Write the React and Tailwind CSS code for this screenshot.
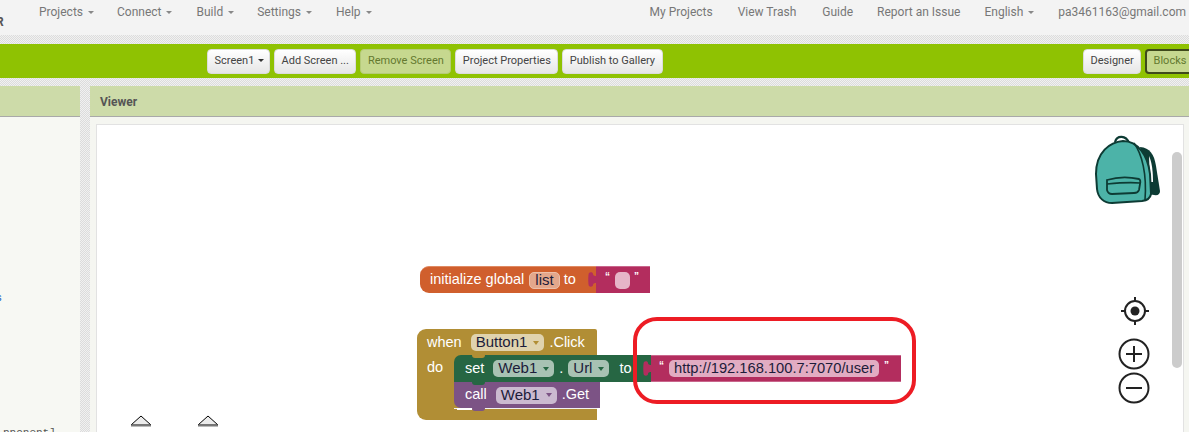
const dotted = 'bg-[repeating-conic-gradient(#dcdcdc_0_25%,#f1f1f1_0_50%)] bg-[length:2px_2px]';

function Caret({ className = 'ml-[5px] border-t-[#888]' }) {
  return <span className={`inline-block w-0 h-0 border-x-[3px] border-x-transparent border-t-[3px] align-middle ${className}`}></span>;
}

function NavItem({ label, caret, className = '' }) {
  return (
    <span className={`whitespace-nowrap ${className}`}>
      {label}
      {caret && <Caret />}
    </span>
  );
}

function ToolButton({ children, active, className = '' }) {
  const look = active
    ? 'bg-[#c6d88f] text-[#64792f]'
    : 'bg-gradient-to-b from-white to-[#e6e6e6] border border-[#dcdcdc] text-[#444]';
  return (
    <button className={`h-[25px] px-[6.5px] rounded-[4px] text-[11px] whitespace-nowrap ${look} ${className}`}>
      {children}
    </button>
  );
}

// puzzle tab on the left of a value block
function Tab({ color }) {
  return (
    <svg width="9" height="15" viewBox="0 0 9 15" className="absolute left-[-8px] top-[5px]">
      <path d="M9 4 C6 4 5 3.5 5 2 C5 0 2 0 1 1 C0 2 0 13 1 14 C2 15 5 15 5 13 C5 11.5 6 11 9 11 Z" fill={color} />
    </svg>
  );
}

function Field({ children, className = '', arrow }) {
  return (
    <span className={`inline-flex items-center h-[17px] pl-[5px] pr-[5px] rounded-[5px] text-[15px] text-[#1c1c3a] ${className}`}>
      {children}
      {arrow && <span className={`ml-[6px] w-0 h-0 border-x-[3px] border-x-transparent border-t-[4px] ${arrow}`}></span>}
    </span>
  );
}

function Quote({ children, className = '' }) {
  return <span className={`text-[10px] font-bold leading-none text-white self-start mt-[5px] ${className}`}>{children}</span>;
}

function Bump({ className }) {
  return <div className={`absolute left-[18px] w-[13px] h-[3px] rounded-b-[4px] ${className}`}></div>;
}

function Backpack() {
  return (
    <svg width="72" height="72" viewBox="0 0 72 72" className="absolute left-[993px] top-[9px]">
      <path d="M50 13 C60 14 64 20 66 32 L70 57 Q70 62 64 61 L58 60 Z" fill="#0d3b34" />
      <path d="M59 22 C62 28 63 38 63 48 L60 48 Z" fill="#fff" />
      <path d="M25 8 C27 1 36 1 39 9" fill="none" stroke="#0d3b34" strokeWidth="2.2" />
      <path d="M6 40 C6 18 20 8 33 7 C48 7 58 22 60 40 L61 60 Q60 66 52 67 L22 69 C14 69 8 64 7 55 Z" fill="#4cb3a8" stroke="#0d3b34" strokeWidth="2" />
      <path d="M44 9 C52 20 57 40 55 66" fill="none" stroke="#0d3b34" strokeWidth="1.6" />
      <path d="M17 46 C27 43 40 43 49 45 Q51 46 50 50 L49 56 Q48 59 44 59 L22 60 Q18 60 17 56 Z" fill="#4cb3a8" stroke="#0d3b34" strokeWidth="1.8" />
      <path d="M17 50 C27 49 40 48 50 49" fill="none" stroke="#0d3b34" strokeWidth="1.6" />
    </svg>
  );
}

function Controls() {
  return (
    <>
      <svg width="32" height="32" viewBox="0 0 32 32" className="absolute left-[1022px] top-[170px]">
        <circle cx="16" cy="16" r="10" fill="none" stroke="#222" strokeWidth="2" />
        <circle cx="16" cy="16" r="4.5" fill="#222" />
        <path d="M16 2 V6 M16 26 V30 M2 16 H6 M26 16 H30" stroke="#222" strokeWidth="2" />
      </svg>
      <svg width="32" height="32" viewBox="0 0 32 32" className="absolute left-[1021px] top-[213px]">
        <circle cx="16" cy="16" r="14.5" fill="#fff" stroke="#222" strokeWidth="2" />
        <path d="M16 8 V24 M8 16 H24" stroke="#222" strokeWidth="2" />
      </svg>
      <svg width="32" height="32" viewBox="0 0 32 32" className="absolute left-[1021px] top-[247px]">
        <circle cx="16" cy="16" r="14.5" fill="#fff" stroke="#222" strokeWidth="2" />
        <path d="M8 16 H24" stroke="#222" strokeWidth="2" />
      </svg>
    </>
  );
}

function Trash({ className }) {
  return (
    <svg width="22" height="12" viewBox="0 0 22 12" className={`absolute top-[290px] ${className}`}>
      <path d="M1 10 L11 1 L21 10 Z" fill="#ececec" stroke="#000" strokeWidth="1" />
      <path d="M1 10.5 H21" stroke="#777" strokeWidth="2" />
    </svg>
  );
}

function Blocks() {
  return (
    <div className="font-['Liberation_Sans',Arial,sans-serif] text-[14.5px] text-white">
      {/* global variable */}
      <div className="absolute left-[323px] top-[141px] flex h-[27px]">
        <div className="flex items-center w-[176px] pl-[10px] rounded-l-[9px] bg-[#d05f2d] border-t border-[#e08a62]">
          initialize global
          <span className="ml-[5px] h-[17px] px-[5px] flex items-center rounded-[5px] text-[15px] bg-[#e3a78c] border border-[#ecc0ab] text-[#1c1c3a]">list</span>
          <span className="ml-[4px]">to</span>
        </div>
        <div className="relative flex items-center w-[54px] pl-[9px] bg-[#b32d5e] border-t border-[#c9668c]">
          <Tab color="#b32d5e" />
          <Quote>“</Quote>
          <span className="ml-[5px] mr-[4px] w-[15px] h-[17px] rounded-[5px] bg-[#e6b5c8]"></span>
          <Quote>”</Quote>
        </div>
      </div>

      {/* when Button1.Click */}
      <div className="absolute left-[320px] top-[204px] w-[180px] h-[91px] rounded-l-[9px] rounded-tr-[2px] bg-[#b18e35]">
        <div className="flex items-center h-[26px] pt-[1px] pl-[10px]">
          when
          <Field className="ml-[9px] bg-[#e0d3ae]" arrow="border-t-[#b18e35]">Button1</Field>
          <span className="ml-[5px]">.Click</span>
        </div>
        <div className="pl-[10px] mt-[2px]">do</div>
        <div className="absolute left-[37px] top-[79px] w-[143px] h-[1px] bg-[#f2f2f2]"></div>
        <div className="absolute left-[40px] top-[79px] w-[15px] h-[2px] bg-white"></div>
        <div className="absolute left-[37px] top-[26px]">
          <div className="relative flex items-center h-[27px] w-[197px] pl-[11px] bg-[#266643] rounded-tl-[7px]">
            <Bump className="top-0 bg-[#b18e35]" />
            set
            <Field className="ml-[9px] bg-[#a8c2b3]" arrow="border-t-[#266643]">Web1</Field>
            <span className="mx-[5px]">.</span>
            <Field className="bg-[#a8c2b3]" arrow="border-t-[#266643]">Url</Field>
            <span className="ml-[10px]">to</span>
          </div>
          <div className="relative flex items-center h-[26px] w-[146px] pl-[11px] bg-[#7c5385] rounded-bl-[7px]">
            <Bump className="top-0 bg-[#266643]" />
            call
            <Field className="ml-[9px] bg-[#cbbad0]" arrow="border-t-[#7c5385]">Web1</Field>
            <span className="ml-[5px]">.Get</span>
            <Bump className="top-[26px] bg-[#7c5385]" />
          </div>
        </div>
      </div>

      {/* url text block */}
      <div className="absolute left-[554px] top-[230px] flex items-center h-[27px] w-[250px] pl-[8px] bg-[#b32d5e] border-y border-[#c9668c]">
        <Tab color="#b32d5e" />
        <Quote>“</Quote>
        <span className="ml-[5px] h-[17px] px-[5px] flex items-center rounded-[5px] text-[14.7px] bg-[#e2acc2] text-[#1c1c3a]">http://192.168.100.7:7070/user</span>
        <Quote className="ml-[5px]">”</Quote>
      </div>

      {/* annotation */}
      <div className="absolute left-[536px] top-[192px] w-[283px] h-[87px] rounded-[24px] border-[4px] border-[#ed1c24]"></div>
    </div>
  );
}

export default function App() {
  return (
    <div className="h-[432px] w-[1189px] overflow-hidden flex flex-col bg-white font-['Roboto',sans-serif]">
      {/* top nav */}
      <div className="relative flex items-start h-[35px] bg-[#f3f3f3] text-[12px] text-[#777]">
        <span className="absolute left-[-4px] top-[13px] text-[12px] text-[#555] font-bold">R</span>
        <div className="flex pl-[39px] pt-[4px] leading-[16px]">
          <NavItem label="Projects" caret />
          <NavItem label="Connect" caret className="ml-[23px]" />
          <NavItem label="Build" caret className="ml-[24px]" />
          <NavItem label="Settings" caret className="ml-[23px]" />
          <NavItem label="Help" caret className="ml-[24px]" />
        </div>
        <div className="flex ml-auto pr-[3px] pt-[4px] leading-[16px]">
          <NavItem label="My Projects" />
          <NavItem label="View Trash" className="ml-[25px]" />
          <NavItem label="Guide" className="ml-[26px]" />
          <NavItem label="Report an Issue" className="ml-[24px]" />
          <NavItem label="English" caret className="ml-[24px]" />
          <NavItem label="pa3461163@gmail.com" className="ml-[24px]" />
        </div>
      </div>
      <div className={`h-[9px] ${dotted}`}></div>

      {/* toolbar */}
      <div className="flex items-center h-[34px] bg-[#8fc202] pl-[207px] gap-[4px]">
        <ToolButton className="w-[63px]">Screen1<Caret className="ml-[4px] border-t-[#333]" /></ToolButton>
        <ToolButton>Add Screen ...</ToolButton>
        <ToolButton active className="border border-[#b5cb78]">Remove Screen</ToolButton>
        <ToolButton>Project Properties</ToolButton>
        <ToolButton>Publish to Gallery</ToolButton>
        <ToolButton className="ml-auto w-[58px]">Designer</ToolButton>
        <ToolButton active className="border-2 border-[#3f4a1c] shrink-0 w-[50px] mr-[-6px]">Blocks</ToolButton>
      </div>
      <div className={`h-[8px] ${dotted}`}></div>

      {/* panels */}
      <div className="flex flex-1 min-h-0">
        <div className="relative w-[80px] flex flex-col bg-[#f7f8f3] overflow-hidden">
          <div className="h-[31px] bg-[#cddba9] border-b border-[#a9a9a9]"></div>
          <span className="absolute left-[-4px] top-[206px] text-[11px] leading-none text-[#2563c4]">s</span>
          <span className="absolute left-[3px] top-[342px] text-[11px] leading-none text-[#555] whitespace-nowrap font-['Liberation_Mono',monospace]">pponent]</span>
        </div>
        <div className={`w-[10px] ${dotted}`}></div>
        <div className="flex-1 min-w-0 flex flex-col bg-[#f5f6f1]">
          <div className="h-[31px] flex items-center pl-[10px] pt-[1px] bg-[#cddba9] border-b border-[#a9a9a9] text-[12px] font-bold text-[#555]">Viewer</div>
          <div className="relative flex-1 mt-[7px] ml-[6px] mr-[5px] bg-white border border-[#e2e2e2] border-b-0">
            <Backpack />
            {/* scrollbar */}
            <div className="absolute left-[1075px] top-[27px] w-[10px] h-[216px] rounded-[5px] bg-[#cccccc]"></div>
            <Blocks />
            <Controls />
            <Trash className="left-[33px]" />
            <Trash className="left-[100px]" />
          </div>
        </div>
      </div>
    </div>
  );
}
